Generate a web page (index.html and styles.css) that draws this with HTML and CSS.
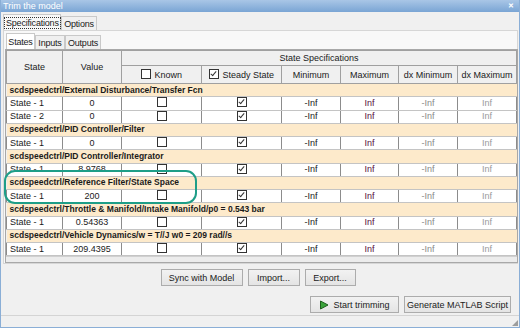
FILE: index.html
```html
<!DOCTYPE html>
<html lang="en">
  <head>
    <meta charset="UTF-8" />
    <title>Trim the model</title>
    <link rel="stylesheet" href="styles.css">
  </head>
  <body>
    <div class="window">
      <div class="titlebar">
        <span class="title">Trim the model</span>
        <span class="close">&#x2715;</span>
      </div>
      <div class="tabs outer">
        <div class="tab active spec"><span class="focus">Specifications</span></div>
        <div class="tab opts">Options</div>
      </div>
      <div class="page">
        <div class="tabs inner">
          <div class="tab active states">States</div>
          <div class="tab inputs">Inputs</div>
          <div class="tab outputs">Outputs</div>
        </div>
        <div class="grid-wrap">
          <table class="grid">
            <colgroup>
              <col style="width:56px"><col style="width:59px"><col style="width:80px"><col style="width:80px">
              <col style="width:59px"><col style="width:58px"><col style="width:59px"><col style="width:59px">
            </colgroup>
            <thead>
              <tr class="h1">
                <th rowspan="2">State</th>
                <th rowspan="2">Value</th>
                <th colspan="6">State Specifications</th>
              </tr>
              <tr class="h2">
                <th><span class="cb"></span> Known</th>
                <th><span class="cb on"></span> Steady State</th>
                <th>Minimum</th>
                <th>Maximum</th>
                <th>dx Minimum</th>
                <th>dx Maximum</th>
              </tr>
            </thead>
            <tbody>
              <tr class="group"><td colspan="8">scdspeedctrl/External Disturbance/Transfer Fcn</td></tr>
              <tr>
                <td class="name">State - 1</td><td class="val">0</td>
                <td><span class="cb"></span></td><td><span class="cb on"></span></td>
                <td class="min">-Inf</td><td class="max">Inf</td><td class="dmin">-Inf</td><td class="dmax">Inf</td>
              </tr>
              <tr>
                <td class="name">State - 2</td><td class="val">0</td>
                <td><span class="cb"></span></td><td><span class="cb on"></span></td>
                <td class="min">-Inf</td><td class="max">Inf</td><td class="dmin">-Inf</td><td class="dmax">Inf</td>
              </tr>
              <tr class="group"><td colspan="8">scdspeedctrl/PID Controller/Filter</td></tr>
              <tr>
                <td class="name">State - 1</td><td class="val">0</td>
                <td><span class="cb"></span></td><td><span class="cb on"></span></td>
                <td class="min">-Inf</td><td class="max">Inf</td><td class="dmin">-Inf</td><td class="dmax">Inf</td>
              </tr>
              <tr class="group"><td colspan="8">scdspeedctrl/PID Controller/Integrator</td></tr>
              <tr>
                <td class="name">State - 1</td><td class="val">8.9768</td>
                <td><span class="cb"></span></td><td><span class="cb on"></span></td>
                <td class="min">-Inf</td><td class="max">Inf</td><td class="dmin">-Inf</td><td class="dmax">Inf</td>
              </tr>
              <tr class="group"><td colspan="8">scdspeedctrl/Reference Filter/State Space</td></tr>
              <tr>
                <td class="name">State - 1</td><td class="val">200</td>
                <td><span class="cb"></span></td><td><span class="cb on"></span></td>
                <td class="min">-Inf</td><td class="max">Inf</td><td class="dmin">-Inf</td><td class="dmax">Inf</td>
              </tr>
              <tr class="group"><td colspan="8">scdspeedctrl/Throttle &amp; Manifold/Intake Manifold/p0 = 0.543 bar</td></tr>
              <tr>
                <td class="name">State - 1</td><td class="val">0.54363</td>
                <td><span class="cb"></span></td><td><span class="cb on"></span></td>
                <td class="min">-Inf</td><td class="max">Inf</td><td class="dmin">-Inf</td><td class="dmax">Inf</td>
              </tr>
              <tr class="group"><td colspan="8">scdspeedctrl/Vehicle Dynamics/w = T//J w0 = 209 rad//s</td></tr>
              <tr>
                <td class="name">State - 1</td><td class="val">209.4395</td>
                <td><span class="cb"></span></td><td><span class="cb on"></span></td>
                <td class="min">-Inf</td><td class="max">Inf</td><td class="dmin">-Inf</td><td class="dmax">Inf</td>
              </tr>
            </tbody>
          </table>
          <div class="hscroll"></div>
          <div class="highlight"></div>
        </div>
      </div>
      <div class="actions">
        <button class="btn sync">Sync with Model</button>
        <button class="btn imp">Import...</button>
        <button class="btn exp">Export...</button>
      </div>
      <div class="actions run">
        <button class="btn start">
          <svg width="10" height="10" viewBox="0 0 10 10"><path d="M1.5 1 L9 5 L1.5 9 Z" fill="#3aa33a" stroke="#1d5e1d" stroke-width="1"/></svg>
          Start trimming
        </button>
        <button class="btn gen">Generate MATLAB Script</button>
      </div>
      <div class="status"><span class="grip"></span></div>
    </div>
  </body>
</html>
```

FILE: styles.css
```css
body {
  margin: 0;
  font-family: "Liberation Sans", Arial, sans-serif;
  font-size: 9px;
  color: #1a1a1a;
}
.window {
  width: 520px;
  height: 328px;
  box-sizing: border-box;
  background: #f0f0f0;
  border: 1px solid #8aaed6;
  border-top: none;
  display: flex;
  flex-direction: column;
  overflow: hidden;
}
.titlebar {
  height: 12px;
  background: linear-gradient(#a9c6e6, #7aa5d4);
  color: #fff;
  display: flex;
  align-items: center;
  justify-content: space-between;
  padding: 0 5px 0 2px;
  font-size: 9px;
}
.close {
  font-size: 7px;
  font-weight: bold;
}
.tabs {
  display: flex;
  align-items: flex-end;
}
.tabs.outer {
  height: 17px;
  padding: 1px 0 0 2px;
}
.tab {
  border: 1px solid #c9c9c9;
  border-bottom: none;
  padding: 0;
  height: 14px;
  line-height: 14px;
  font-size: 9px;
  text-align: center;
  white-space: nowrap;
  letter-spacing: -0.2px;
  background: #f0f0f0;
  box-sizing: border-box;
}
.tab.active {
  background: #f8f8f8;
  height: 16px;
  line-height: 16px;
}
.spec { width: 58px; }
.opts { width: 36px; }
.states { width: 29px; }
.inputs { width: 30px; }
.outputs { width: 36px; }
.focus {
  border: 1px dotted #333;
  padding: 0 1px;
}
.page {
  border: 1px solid #d6d6d6;
  margin: 0 1px 0 2px;
  background: #f8f8f8;
  padding: 1px 1px 0 1px;
}
.tabs.inner {
  height: 17px;
  padding-left: 1px;
}
.inner .tab {
  background: #f0f0f0;
}
.inner .tab.active {
  background: #fff;
}
.grid-wrap {
  position: relative;
  border: 1px solid #a8a8a8;
  width: 511px;
  background: #f0f0f0;
}
.grid {
  border-collapse: collapse;
  table-layout: fixed;
  width: 510px;
}
.grid th {
  background: #f0f0f0;
  border: 1px solid #a0a0a0;
  font-weight: normal;
  font-size: 9px;
  padding: 0;
  white-space: nowrap;
}
.grid tr.h1 {
  height: 15px;
}
.grid tr.h2 {
  height: 18px;
}
.grid tbody tr {
  height: 13.25px;
}
.grid td {
  border: 1px solid #8c8c8c;
  border-top-color: #c4c4c4;
  border-bottom-color: #c4c4c4;
  background: #fff;
  padding: 0;
  text-align: center;
  white-space: nowrap;
  overflow: hidden;
  font-size: 9px;
  line-height: 11px;
}
.grid tr.group td {
  background: #fdeacb;
  font-weight: bold;
  font-size: 8.5px;
  text-align: left;
  padding-left: 3px;
  border-left: none;
  border-right: none;
}
.grid td.name {
  text-align: left;
  padding-left: 3px;
}
.grid td.min {
  color: #1a1a1a;
}
.grid td.max {
  color: #5a1040;
}
.grid td.dmin {
  color: #8a8a8a;
}
.grid td.dmax {
  color: #9a9a9a;
  border-left-color: #d8d8d8;
}
.cb {
  display: inline-block;
  width: 8px;
  height: 8px;
  border: 1px solid #333;
  background: #fff;
  vertical-align: -1px;
  position: relative;
}
.cb.on::after {
  content: "";
  position: absolute;
  left: 2px;
  top: 0px;
  width: 2px;
  height: 5px;
  border: solid #333;
  border-width: 0 1px 1px 0;
  transform: rotate(40deg);
}
.grid th .cb {
  margin-right: 1px;
}
.hscroll {
  height: 5px;
  background: #ececec;
  border-top: 1px solid #d0d0d0;
}
.highlight {
  position: absolute;
  left: -2px;
  top: 120px;
  width: 189px;
  height: 30px;
  border: 2px solid #1e9e88;
  border-radius: 11px;
  pointer-events: none;
}
.actions {
  display: flex;
  justify-content: center;
  gap: 5px;
  padding-top: 5px;
  padding-right: 4px;
}
.actions.run {
  justify-content: flex-end;
  gap: 5px;
  padding: 10px 8px 0 0;
}
.btn {
  font-family: "Liberation Sans", Arial, sans-serif;
  font-size: 9px;
  color: #1a1a1a;
  background: linear-gradient(#f2f2f2, #e4e4e4);
  border: 1px solid #acacac;
  height: 17px;
  padding: 0;
  display: flex;
  align-items: center;
  justify-content: center;
  gap: 4px;
  white-space: nowrap;
}
.sync { width: 82px; }
.imp { width: 52px; }
.exp { width: 51px; }
.start { width: 89px; }
.gen { width: 107px; }
.status {
  margin-top: auto;
  height: 11px;
  border-top: 1px solid #d4d4d4;
  position: relative;
}
.grip {
  position: absolute;
  right: 1px;
  bottom: 1px;
  width: 6px;
  height: 6px;
  background: radial-gradient(circle, #9a9a9a 0.7px, transparent 0.9px) 0 0 / 2px 2px;
  clip-path: polygon(100% 0, 100% 100%, 0 100%);
}
```
